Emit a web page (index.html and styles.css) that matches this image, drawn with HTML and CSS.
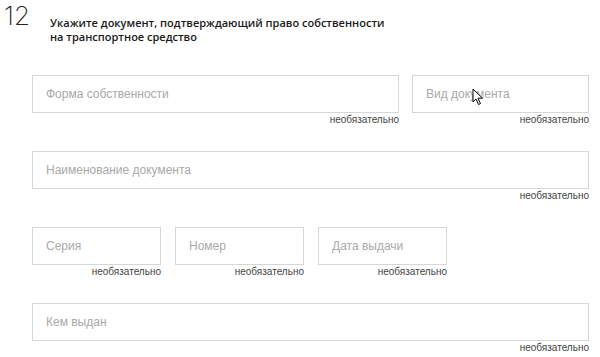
FILE: index.html
```html
<!DOCTYPE html>
<html lang="ru">
<head>
  <meta charset="UTF-8">
  <meta name="viewport" content="width=device-width, initial-scale=1.0">
  <title>Документ о праве собственности</title>
  <link rel="stylesheet" href="styles.css">
</head>
<body>
  <div class="step">
    <div class="step-header">
      <span class="step-number">12</span>
      <h2 class="step-title">Укажите документ, подтверждающий право собственности<br>на транспортное средство</h2>
    </div>

    <form class="doc-form">
      <div class="form-row">
        <div class="field field-wide">
          <input type="text" placeholder="Форма собственности">
          <span class="optional">необязательно</span>
        </div>
        <div class="field field-type">
          <input type="text" placeholder="Вид документа">
          <span class="optional">необязательно</span>
          <svg class="cursor" width="12" height="18" viewBox="0 0 12 18">
            <path d="M1 1 L1 14 L4 11 L6.5 16.5 L8.5 15.6 L6 10.2 L10.5 10.2 Z" fill="#fff" stroke="#000" stroke-width="1" stroke-linejoin="round"/>
          </svg>
        </div>
      </div>

      <div class="form-row">
        <div class="field field-full">
          <input type="text" placeholder="Наименование документа">
          <span class="optional">необязательно</span>
        </div>
      </div>

      <div class="form-row">
        <div class="field field-small">
          <input type="text" placeholder="Серия">
          <span class="optional">необязательно</span>
        </div>
        <div class="field field-small">
          <input type="text" placeholder="Номер">
          <span class="optional">необязательно</span>
        </div>
        <div class="field field-small">
          <input type="text" placeholder="Дата выдачи">
          <span class="optional">необязательно</span>
        </div>
      </div>

      <div class="form-row">
        <div class="field field-full">
          <input type="text" placeholder="Кем выдан">
          <span class="optional">необязательно</span>
        </div>
      </div>
    </form>
  </div>
</body>
</html>
```

FILE: styles.css
```css
body {
  margin: 0;
  background: #fff;
  font-family: "Liberation Sans", Arial, sans-serif;
}

.step {
  padding: 3px 11px 0 4px;
}

/* Header with step number */
.step-header {
  display: flex;
  align-items: flex-start;
}

.step-number {
  width: 46px;
  font-family: Inter, "Open Sans", sans-serif;
  font-weight: 200;
  font-size: 26px;
  line-height: 26px;
  color: #222;
}

.step-title {
  margin: 13px 0 0 0;
  font-family: "Open Sans", sans-serif;
  font-weight: 600;
  font-size: 11px;
  line-height: 14px;
  color: #1a1a1a;
}

/* Form */
.doc-form {
  margin-top: 31px;
  padding-left: 28px;
}

.form-row {
  display: flex;
  gap: 13px;
  margin-bottom: 25px;
}

.field {
  position: relative;
  display: flex;
  flex-direction: column;
}

.field-wide {
  width: 367px;
}

.field-type {
  width: 177px;
}

.field-full {
  flex: 1;
}

.field-small {
  width: 129px;
  margin-right: 1px;
}

.field input {
  height: 38px;
  box-sizing: border-box;
  border: 1px solid #d6d6d6;
  padding: 0 13px;
  font-family: "Liberation Sans", Arial, sans-serif;
  font-size: 12px;
  color: #333;
  outline: none;
}

.field input::placeholder {
  color: #a9a9a9;
}

.optional {
  align-self: flex-end;
  margin-top: 1px;
  font-size: 10px;
  line-height: 12px;
  color: #444;
}

.cursor {
  position: absolute;
  left: 60px;
  top: 13px;
}
```
